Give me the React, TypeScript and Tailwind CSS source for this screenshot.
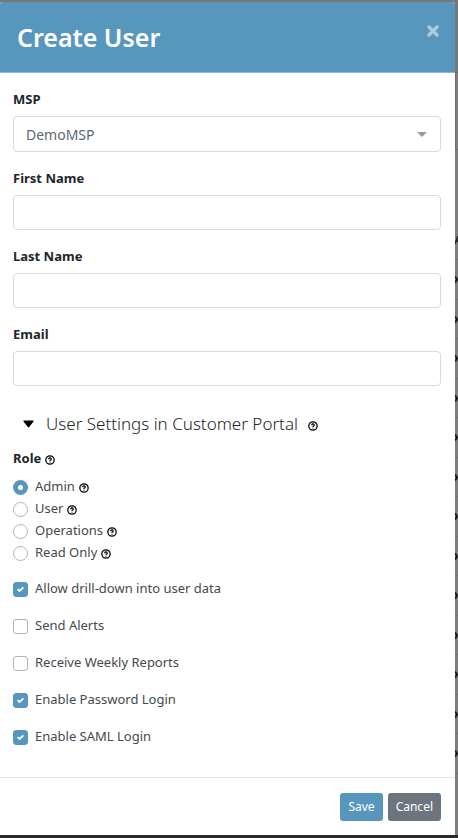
import { useState } from 'react';
import type { ReactNode } from 'react';
import { CircleHelp } from 'lucide-react';

const TEXT_FIELDS = [
  { id: 'first-name', label: 'First Name', type: 'text' },
  { id: 'last-name', label: 'Last Name', type: 'text' },
  { id: 'email', label: 'Email', type: 'email' },
];

const ROLES = ['Admin', 'User', 'Operations', 'Read Only'];

const OPTIONS = [
  { label: 'Allow drill-down into user data', on: true },
  { label: 'Send Alerts', on: false },
  { label: 'Receive Weekly Reports', on: false },
  { label: 'Enable Password Login', on: true },
  { label: 'Enable SAML Login', on: true },
];

const TABLE_ROWS = Array.from({ length: 13 }, (_, i) => i);

function HelpIcon() {
  return <CircleHelp className="mt-0.5 h-[10px] w-[10px] shrink-0 text-black" strokeWidth={3} />;
}

function FieldLabel({ htmlFor, children }: { htmlFor: string; children: ReactNode }) {
  return (
    <label htmlFor={htmlFor} className="block text-[13px] leading-[22px] font-bold text-[#212529]">
      {children}
    </label>
  );
}

function CheckOption({ label, on }: { label: string; on: boolean }) {
  const [checked, setChecked] = useState(on);
  return (
    <label className="flex h-[22px] items-center gap-[7px] text-[13px] text-[#45494d]">
      <span className="grid h-[15px] w-[15px] shrink-0">
        <input
          type="checkbox"
          checked={checked}
          onChange={e => setChecked(e.target.checked)}
          className="col-start-1 row-start-1 h-[15px] w-[15px] appearance-none rounded-[3px] border border-[#adb5bd] bg-white checked:border-[#5797be] checked:bg-[#5797be]"
        />
        {checked && (
          <svg viewBox="0 0 8 8" className="pointer-events-none col-start-1 row-start-1 h-[7px] w-[7px] place-self-center">
            <path fill="#fff" d="M6.564.75l-3.59 3.612-1.538-1.55L0 4.26l2.974 2.99L8 2.193z" />
          </svg>
        )}
      </span>
      {label}
    </label>
  );
}

// Sliver of the dimmed table that shows past the dialog's right edge
function Backdrop() {
  return (
    <div aria-hidden="true" className="flex w-[3px] shrink-0 flex-col overflow-hidden bg-[#7f7f7f]">
      <div className="h-[71px] shrink-0 border-b border-[#6c6c6c] bg-[#777777]" />
      <div className="h-[77px] shrink-0 border-b border-l border-[#6e6e6e]" />
      <div className="flex h-[110px] shrink-0 items-end border-b border-[#727272] pb-[15px]">
        <svg viewBox="0 0 3 9" className="h-[9px] w-[3px]">
          <path d="M0 9L3 1M1 6h2" stroke="#222" strokeWidth="1.6" fill="none" />
        </svg>
      </div>
      {/* h-0 keeps the rows from stretching the page; they fill what the form leaves */}
      <div className="h-0 flex-1 overflow-hidden">
        {TABLE_ROWS.map(row => (
          <div key={row} className="flex items-center border-b border-[#727272] odd:h-10 even:h-[39px]">
            <svg viewBox="0 0 3 7" className="h-[7px] w-[3px]">
              <path d="M0 .5L2 3.5 0 6.5" stroke="#151515" strokeWidth="2" fill="none" />
            </svg>
          </div>
        ))}
      </div>
    </div>
  );
}

export default function App() {
  const [role, setRole] = useState('Admin');
  const [open, setOpen] = useState(true);

  return (
    <div className="flex min-h-screen flex-col border-t-2 border-b-3 border-t-[#777777] border-b-[#292a2c] bg-[#7f7f7f] font-['Noto_Sans',sans-serif]">
      <div className="flex flex-1">
        <form
          role="dialog"
          aria-labelledby="dialog-title"
          onSubmit={e => e.preventDefault()}
          className="flex min-w-0 flex-1 flex-col overflow-hidden rounded-t-[3px] bg-white"
        >
          <header className="flex items-start justify-between border-b border-[#8db9d3] bg-[#5797be] pr-4 pl-[17px]">
            <h1 id="dialog-title" className="py-4 text-[25px] leading-[38px] font-semibold text-white">
              Create User
            </h1>
            <button type="button" aria-label="Close" className="mt-[23px] text-[#accbde]">
              <svg viewBox="0 0 12 12" className="h-3 w-3">
                <path d="M2 2l8 8M10 2l-8 8" stroke="currentColor" strokeWidth="3.4" strokeLinecap="round" />
              </svg>
            </button>
          </header>

          <div className="flex flex-1 flex-col py-[15px] pr-[14px] pl-[13px]">
            <div className="flex flex-col gap-[15px]">
              <div className="flex flex-col gap-1.5">
                <FieldLabel htmlFor="msp">MSP</FieldLabel>
                <div className="grid items-center">
                  <select
                    id="msp"
                    className="col-start-1 row-start-1 h-9 w-full appearance-none rounded border border-[#d6dbe0] bg-white px-3 text-[14px] text-[#5c6873]"
                  >
                    <option>DemoMSP</option>
                  </select>
                  <svg viewBox="0 0 10 5" className="pointer-events-none col-start-1 row-start-1 mr-[14px] h-[5px] w-[10px] justify-self-end">
                    <path d="M0 0h10L5 5z" fill="#999" />
                  </svg>
                </div>
              </div>
              {TEXT_FIELDS.map(field => (
                <div key={field.id} className="flex flex-col gap-1.5">
                  <FieldLabel htmlFor={field.id}>{field.label}</FieldLabel>
                  <input
                    id={field.id}
                    type={field.type}
                    className="h-[35px] w-full rounded border border-[#d6dbe0] px-3 text-[14px] text-[#5c6873] outline-none focus:border-[#5797be]"
                  />
                </div>
              ))}
            </div>

            <h2 className="mt-6 flex items-center pl-[10px] text-[17px] leading-7 font-light text-[#212529]">
              <button type="button" aria-expanded={open} onClick={() => setOpen(!open)} className="flex items-center gap-3">
                <svg viewBox="0 0 11 8" className="h-2 w-[11px]">
                  <path d="M1 .5h9q1 0 .5 1L6.2 7q-.7.9-1.4 0L.5 1.5Q0 .5 1 .5z" fill="#000" />
                </svg>
                User Settings in Customer Portal
              </button>
              <span className="mt-0.5 ml-[10px]">
                <HelpIcon />
              </span>
            </h2>

            {open && (
              <>
                <fieldset className="mt-[10px]">
                  <legend className="flex h-[22px] items-center gap-1 text-[13px] font-bold text-[#212529]">
                    Role <HelpIcon />
                  </legend>
                  <div className="mt-1.5">
                    {ROLES.map(name => (
                      <div key={name} className="flex h-[22px] items-center gap-1">
                        <label className="flex items-center gap-[7px] text-[13px] text-[#45494d]">
                          <input
                            type="radio"
                            name="role"
                            value={name}
                            checked={role === name}
                            onChange={() => setRole(name)}
                            className="h-[15px] w-[15px] shrink-0 appearance-none rounded-full border border-[#adb5bd] bg-white checked:border-5 checked:border-[#5797be]"
                          />
                          {name}
                        </label>
                        <HelpIcon />
                      </div>
                    ))}
                  </div>
                </fieldset>

                <div className="mt-[14px] flex flex-col gap-[15px]">
                  {OPTIONS.map(option => (
                    <CheckOption key={option.label} label={option.label} on={option.on} />
                  ))}
                </div>
              </>
            )}
          </div>

          <footer className="flex justify-end gap-[5px] border-t border-[#e4e7ea] px-[14px] pt-[15px] pb-[14px]">
            <button type="submit" className="h-7 rounded-[3px] bg-[#5797be] px-2 text-[12px] text-white">
              Save
            </button>
            <button type="button" className="h-7 rounded-[3px] bg-[#6c757d] px-2 text-[12px] text-white">
              Cancel
            </button>
          </footer>
        </form>
        <Backdrop />
      </div>
    </div>
  );
}
